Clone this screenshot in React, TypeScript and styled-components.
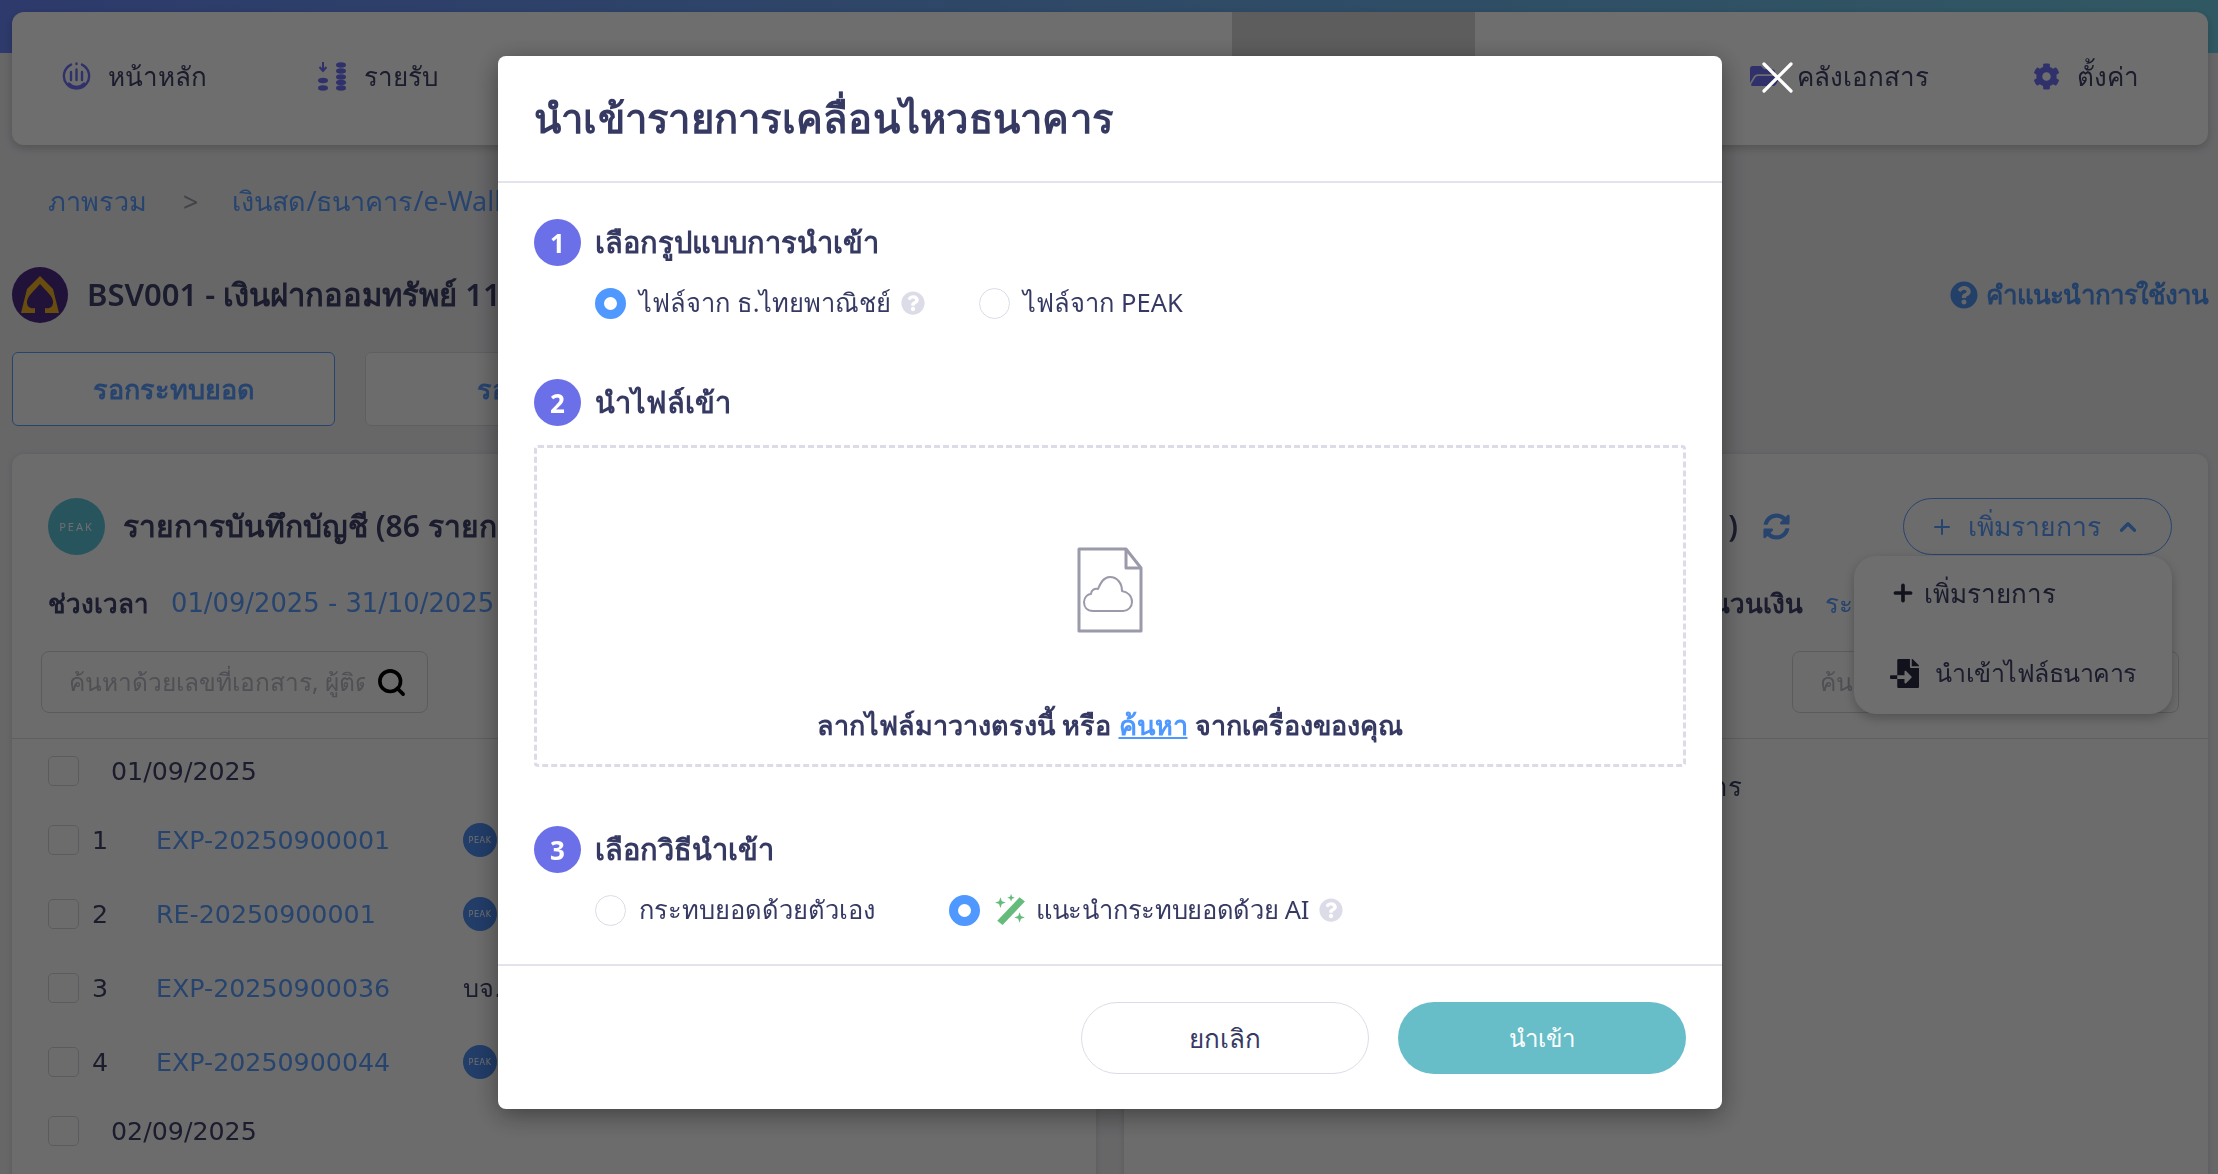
import React from 'react';
import styled, { createGlobalStyle } from 'styled-components';
import { FaCog, FaFolderOpen, FaSyncAlt, FaQuestionCircle, FaFileImport } from 'react-icons/fa';
import { FiPlus, FiChevronUp, FiSearch } from 'react-icons/fi';

const GlobalStyle = createGlobalStyle`
  * { box-sizing: border-box; }
  html, body { margin: 0; height: 1174px; overflow: hidden; background: #eeeef2; }
  body { font-family: "Noto Sans", "Open Sans", "Liberation Sans", sans-serif; color: #363a63; }
  #root { height: 100%; }
`;

const Page = styled.div`
  height: 1174px;
  overflow: hidden;
  padding: 12px 10px 0 12px;
  background: linear-gradient(to right, #6a87f8, #70cde4) no-repeat;
  background-size: 100% 53px;
  color: #3f4268;
  filter: blur(0.6px);
`;

const TopNav = styled.nav`
  display: flex;
  height: 133px;
  background: #fff;
  border-radius: 12px;
  box-shadow: 0 3px 8px rgba(0, 0, 0, 0.2);
  overflow: hidden;
`;
const NavItem = styled.div<{ $width: number; $active?: boolean }>`
  display: flex;
  align-items: center;
  gap: 17px;
  flex: 0 0 ${p => p.$width}px;
  padding: 0 0 5px 50px;
  font-size: 26px;
  background: ${p => (p.$active ? '#d8d8d8' : 'transparent')};
  svg { color: #7073f5; flex: none; }
`;

const Breadcrumb = styled.div`
  display: flex;
  align-items: center;
  height: 40px;
  margin-top: 36px;
  padding-left: 36px;
  font-size: 27px;
  color: #5b9dff;
`;
const Chevron = styled.span`
  margin: 0 34px 0 36px;
  color: #9a9aa5;
`;

const TitleRow = styled.div`
  display: flex;
  align-items: center;
  justify-content: space-between;
  height: 55px;
  margin-top: 46px;
`;
const AccountTitle = styled.div`
  display: flex;
  align-items: center;
  gap: 19px;
  font-size: 31px;
  font-weight: 600;
`;
const HelpLink = styled.div`
  display: flex;
  align-items: center;
  gap: 8px;
  font-size: 26px;
  font-weight: 700;
  letter-spacing: -1.1px;
  color: #5295f0;
`;

const Tabs = styled.div`
  display: flex;
  gap: 30px;
  margin-top: 30px;
`;
const Tab = styled.div<{ $active?: boolean }>`
  display: flex;
  align-items: center;
  justify-content: center;
  width: 323px;
  height: 74px;
  border: 1px solid ${p => (p.$active ? '#5b9dff' : '#dcdce2')};
  border-radius: 6px;
  background: #fafafa;
  font-size: 27px;
  font-weight: 600;
  color: #5b9dff;
`;

const Panels = styled.div`
  display: grid;
  grid-template-columns: 1084px 1084px;
  gap: 28px;
  margin-top: 28px;
`;
const Panel = styled.section`
  height: 760px;
  padding-top: 44px;
  background: #fbfbfb;
  border-radius: 12px 12px 0 0;
  box-shadow: 0 1px 6px rgba(0, 0, 0, 0.12);
`;
const PanelHeader = styled.div<{ $end?: boolean }>`
  display: flex;
  align-items: center;
  justify-content: ${p => (p.$end ? 'flex-end' : 'flex-start')};
  height: 57px;
  padding: 0 36px;
  font-size: 30px;
  font-weight: 600;
`;
const PeakBig = styled.div`
  display: flex;
  align-items: center;
  justify-content: center;
  flex: none;
  width: 57px;
  height: 57px;
  margin-right: 18px;
  border-radius: 50%;
  background: #5ec3d8;
  color: #fff;
  font-size: 11px;
  font-weight: 400;
  letter-spacing: 2px;
`;
const PeakSmall = styled(PeakBig)`
  width: 34px;
  height: 34px;
  margin: 0;
  background: #4d8df2;
  font-size: 8px;
  letter-spacing: 0.6px;
`;
const RefreshIcon = styled(FaSyncAlt)`
  margin: 0 113px 0 25px;
  color: #5b9dff;
`;
const AddButton = styled.div`
  display: flex;
  align-items: center;
  gap: 14px;
  width: 269px;
  height: 57px;
  padding-left: 26px;
  border: 1px solid #5b9dff;
  border-radius: 29px;
  font-size: 26.5px;
  font-weight: 400;
  color: #5b9dff;
  svg:last-child { stroke-width: 3; }
`;
const FilterRow = styled.div<{ $inset?: number }>`
  display: flex;
  align-items: center;
  gap: 22px;
  height: 40px;
  margin-top: 28px;
  padding-left: ${p => p.$inset ?? 36}px;
`;
const FilterLabel = styled.span`
  font-size: 26px;
  font-weight: 700;
`;
const FilterValue = styled.span`
  font-family: "DejaVu Sans", "Noto Sans", sans-serif;
  font-size: 25.8px;
  color: #5b9dff;
`;
const SearchBox = styled.div<{ $right?: boolean }>`
  display: flex;
  align-items: center;
  justify-content: space-between;
  width: 387px;
  height: 62px;
  margin: 28px 0 25px ${p => (p.$right ? '668px' : '29px')};
  padding: 0 20px 0 27px;
  border: 1px solid #d4d4da;
  border-radius: 8px;
  font-size: 24.5px;
  color: #b9b9c4;
  svg { color: #000; flex: none; }
`;
const Placeholder = styled.span`
  overflow: hidden;
  white-space: nowrap;
  width: 296px;
`;
const List = styled.div`
  border-top: 1px solid #dcdce2;
  font-family: "DejaVu Sans", "Noto Sans", sans-serif;
  font-size: 25.3px;
`;
const DateRow = styled.div`
  display: grid;
  grid-template-columns: 63px auto;
  align-items: center;
  height: 64px;
  padding-left: 36px;
`;
const DocRow = styled.div`
  display: grid;
  grid-template-columns: 44px 64px 307px auto;
  align-items: center;
  height: 74px;
  padding-left: 36px;
`;
const Check = styled.div`
  width: 31px;
  height: 30px;
  border: 1px solid #d4d4da;
  border-radius: 5px;
`;
const DocLink = styled.span`
  color: #5b9dff;
`;
const HiddenEndText = styled.div`
  padding: 27px 0 0 529px;
  font-family: "Noto Sans", sans-serif;
  font-size: 26px;
`;

const Dropdown = styled.div`
  position: fixed;
  left: 1854px;
  top: 556px;
  width: 318px;
  height: 158px;
  padding: 14px 0 0 36px;
  border-radius: 22px;
  background: #fff;
  box-shadow: 0 4px 12px rgba(0, 0, 0, 0.25);
  svg { flex: none; }
`;
const DropdownItem = styled.div<{ $gap: number; $tight?: boolean }>`
  display: flex;
  align-items: center;
  gap: ${p => p.$gap}px;
  height: 46px;
  margin-bottom: 34px;
  font-size: ${p => (p.$tight ? 25 : 26)}px;
  letter-spacing: ${p => (p.$tight ? '-0.5px' : '0')};
  svg { color: #2b2b45; }
`;

const Overlay = styled.div`
  position: fixed;
  inset: 0;
  background: rgba(0, 0, 0, 0.57);
`;
const CloseButton = styled.svg`
  position: fixed;
  left: 1762px;
  top: 62px;
`;

const Modal = styled.div`
  position: fixed;
  left: 498px;
  top: 56px;
  display: flex;
  flex-direction: column;
  width: 1224px;
  height: 1053px;
  background: #fff;
  border-radius: 8px;
  box-shadow: 0 6px 26px rgba(0, 0, 0, 0.42);
`;
const ModalHeader = styled.header`
  display: flex;
  align-items: center;
  flex: 0 0 127px;
  padding: 0 36px;
  border-bottom: 2px solid #e3e3ec;
  font-size: 40px;
  font-weight: 600;
  letter-spacing: 0.25px;
`;
const ModalBody = styled.div`
  flex: 1;
  padding: 36px 36px 0;
`;
const StepTitle = styled.div<{ $top?: number }>`
  display: flex;
  align-items: center;
  gap: 14px;
  height: 47px;
  margin-top: ${p => p.$top ?? 0}px;
  font-size: 29px;
  font-weight: 600;
`;
const StepBadge = styled.span`
  display: flex;
  align-items: center;
  justify-content: center;
  width: 47px;
  height: 47px;
  border-radius: 50%;
  background: #6c70e8;
  color: #fff;
  font-size: 26px;
  font-weight: 700;
`;
const Options = styled.div<{ $gap: number }>`
  display: flex;
  align-items: center;
  gap: ${p => p.$gap}px;
  height: 40px;
  margin-top: 17px;
  padding-left: 61px;
`;
const Option = styled.label`
  display: flex;
  align-items: center;
  font-size: 25.5px;
  svg { flex: none; }
`;
const Radio = styled.span<{ $on?: boolean }>`
  flex: none;
  width: 31px;
  height: 31px;
  margin-right: 13px;
  border-radius: 50%;
  border: ${p => (p.$on ? '9px solid #4f98ff' : '1px solid #dcdce8')};
  background: #fff;
`;
const AiLabel = styled.span`
  margin-left: 9px;
  letter-spacing: -0.3px;
`;
const HelpDot = styled(FaQuestionCircle)`
  margin-left: 10px;
  color: #dcdce8;
`;
const DropZone = styled.div`
  display: flex;
  flex-direction: column;
  align-items: center;
  height: 322px;
  margin-top: 19px;
  padding-top: 99px;
  border: 3px dashed #dcdce8;
  border-radius: 4px;
`;
const DropText = styled.div`
  margin-top: 71px;
  font-size: 27px;
  font-weight: 600;
  a { color: #4f98ff; text-decoration: underline; }
`;
const ModalFooter = styled.footer`
  display: flex;
  justify-content: flex-end;
  gap: 29px;
  flex: 0 0 145px;
  padding: 36px 36px 0;
  border-top: 2px solid #e3e3ec;
`;
const FooterButton = styled.button<{ $primary?: boolean }>`
  width: 288px;
  height: 72px;
  border: ${p => (p.$primary ? 'none' : '1px solid #dcdce8')};
  border-radius: 36px;
  background: ${p => (p.$primary ? '#67bec9' : '#fff')};
  color: ${p => (p.$primary ? '#fff' : '#363a63')};
  font: 400 ${p => (p.$primary ? 24 : 26)}px "Noto Sans", sans-serif;
`;

function HomeIcon() {
  return (
    <svg width="29" height="29" viewBox="0 0 29 29" fill="none" stroke="currentColor" strokeWidth="2.4" strokeLinecap="round">
      <path d="M9 2.6a12.6 12.6 0 1 0 11 0" />
      <path d="M7 21.5a10 10 0 0 0 15 0" />
      <path d="M14.5 1.5v.5M9 10v8M14.5 7.5v10.5M20 10v8" />
    </svg>
  );
}

function IncomeIcon() {
  const disk = (x: number, y: number) => <ellipse key={`${x}-${y}`} cx={x} cy={y} rx="5" ry="2.7" fill="currentColor" />;
  return (
    <svg width="30" height="29" viewBox="0 0 30 29">
      <path d="M6 0v8M2.500 5L6 9l3.500-4" fill="none" stroke="currentColor" strokeWidth="2" />
      {[18.5, 26].map(y => disk(6, y))}
      {[3, 9, 15, 20.5, 26].map(y => disk(24, y))}
    </svg>
  );
}

function ScbLogo() {
  return (
    <svg width="56" height="56" viewBox="0 0 56 56">
      <circle cx="28" cy="28" r="28" fill="#4c2a85" />
      <path d="M28 9L41 22l6 24H33v-5c5 1 8-1 8-6 0-6-7-11-13-18-6 7-13 12-13 18 0 5 3 7 8 6v5H9l6-24z" fill="#f0b324" />
    </svg>
  );
}

function CloudFileIcon() {
  return (
    <svg width="66" height="86" viewBox="0 0 66 86" fill="none" stroke="#9a9aab" strokeLinejoin="round">
      <path d="M2 2h47l15 19v63H2z" strokeWidth="3" />
      <path d="M49 2v19h15" strokeWidth="3" />
      <path d="M16 64c-6 0-9-4-9-9 0-5 4-8 7-8 0-4 4-6 7-5 2-5 5-12 12-12 7 0 12 6 12 14 6 1 10 5 10 11 0 5-4 9-9 9z" strokeWidth="2" />
    </svg>
  );
}

function WandIcon() {
  return (
    <svg width="34" height="32" viewBox="0 0 32 30" fill="#64bb7b">
      <path d="M25 3l5 4L9 29l-5-4z" />
      <path d="M7 3l1.300 3.700L12 8 8.300 9.300 7 13 5.700 9.300 2 8l3.700-1.300zM17 0l1 2.500 2.500 1-2.500 1-1 2.500-1-2.500-2.500-1 2.500-1zM25 17l1.300 3.700L30 22l-3.700 1.300L25 27l-1.300-3.700L20 22l3.700-1.300z" />
    </svg>
  );
}

const docRows = [
  { no: 1, doc: 'EXP-20250900001', peak: true },
  { no: 2, doc: 'RE-20250900001', peak: true },
  { no: 3, doc: 'EXP-20250900036', peak: false },
  { no: 4, doc: 'EXP-20250900044', peak: true },
];

export default function App() {
  return (
    <>
      <GlobalStyle />
      <Page>
        <TopNav>
          <NavItem $width={255}><HomeIcon />หน้าหลัก</NavItem>
          <NavItem $width={255}><IncomeIcon />รายรับ</NavItem>
          <NavItem $width={710} />
          <NavItem $width={243} $active />
          <NavItem $width={225} />
          <NavItem $width={283}><FaFolderOpen size={30} />คลังเอกสาร</NavItem>
          <NavItem $width={224}><FaCog size={27} />ตั้งค่า</NavItem>
        </TopNav>
        <Breadcrumb>
          ภาพรวม<Chevron>&gt;</Chevron>เงินสด/ธนาคาร/e-Wallet
        </Breadcrumb>
        <TitleRow>
          <AccountTitle><ScbLogo />BSV001 - เงินฝากออมทรัพย์ 11</AccountTitle>
          <HelpLink><FaQuestionCircle size={28} />คำแนะนำการใช้งาน</HelpLink>
        </TitleRow>
        <Tabs>
          <Tab $active>รอกระทบยอด</Tab>
          <Tab>รอยืนยัน</Tab>
        </Tabs>
        <Panels>
          <Panel>
            <PanelHeader>
              <PeakBig>PEAK</PeakBig>
              รายการบันทึกบัญชี (86 รายการ)
            </PanelHeader>
            <FilterRow>
              <FilterLabel>ช่วงเวลา</FilterLabel>
              <FilterValue>01/09/2025 - 31/10/2025</FilterValue>
            </FilterRow>
            <SearchBox>
              <Placeholder>ค้นหาด้วยเลขที่เอกสาร, ผู้ติดต่อ</Placeholder>
              <FiSearch size={31} strokeWidth={2.8} />
            </SearchBox>
            <List>
              <DateRow><Check />01/09/2025</DateRow>
              {docRows.map(row => (
                <DocRow key={row.no}>
                  <Check />
                  <span>{row.no}</span>
                  <DocLink>{row.doc}</DocLink>
                  {row.peak ? <PeakSmall>PEAK</PeakSmall> : <span>บจ.</span>}
                </DocRow>
              ))}
              <DateRow><Check />02/09/2025</DateRow>
            </List>
          </Panel>
          <Panel>
            <PanelHeader $end>
              รายการ )
              <RefreshIcon size={27} />
              <AddButton><FiPlus size={24} />เพิ่มรายการ<FiChevronUp size={26} /></AddButton>
            </PanelHeader>
            <FilterRow $inset={558}>
              <FilterLabel>จำนวนเงิน</FilterLabel>
              <FilterValue>ระบุ</FilterValue>
            </FilterRow>
            <SearchBox $right>
              <Placeholder>ค้นหา</Placeholder>
            </SearchBox>
            <List>
              <HiddenEndText>รายการ</HiddenEndText>
            </List>
          </Panel>
        </Panels>
        <Dropdown>
          <DropdownItem $gap={8}><FiPlus size={26} strokeWidth={3.4} />เพิ่มรายการ</DropdownItem>
          <DropdownItem $gap={16} $tight><FaFileImport size={29} />นำเข้าไฟล์ธนาคาร</DropdownItem>
        </Dropdown>
      </Page>
      <Overlay />
      <CloseButton width="31" height="31" viewBox="0 0 31 31">
        <path d="M2 2l27 27M29 2L2 29" stroke="#fff" strokeWidth="3.2" strokeLinecap="round" />
      </CloseButton>
      <Modal>
        <ModalHeader>นำเข้ารายการเคลื่อนไหวธนาคาร</ModalHeader>
        <ModalBody>
          <StepTitle><StepBadge>1</StepBadge>เลือกรูปแบบการนำเข้า</StepTitle>
          <Options $gap={54}>
            <Option><Radio $on />ไฟล์จาก ธ.ไทยพาณิชย์<HelpDot size={24} /></Option>
            <Option><Radio />ไฟล์จาก PEAK</Option>
          </Options>
          <StepTitle $top={56}><StepBadge>2</StepBadge>นำไฟล์เข้า</StepTitle>
          <DropZone>
            <CloudFileIcon />
            <DropText>ลากไฟล์มาวางตรงนี้ หรือ <a href="#">ค้นหา</a> จากเครื่องของคุณ</DropText>
          </DropZone>
          <StepTitle $top={59}><StepBadge>3</StepBadge>เลือกวิธีนำเข้า</StepTitle>
          <Options $gap={74}>
            <Option><Radio />กระทบยอดด้วยตัวเอง</Option>
            <Option>
              <Radio $on />
              <WandIcon />
              <AiLabel>แนะนำกระทบยอดด้วย AI</AiLabel>
              <HelpDot size={24} />
            </Option>
          </Options>
        </ModalBody>
        <ModalFooter>
          <FooterButton>ยกเลิก</FooterButton>
          <FooterButton $primary>นำเข้า</FooterButton>
        </ModalFooter>
      </Modal>
    </>
  );
}
